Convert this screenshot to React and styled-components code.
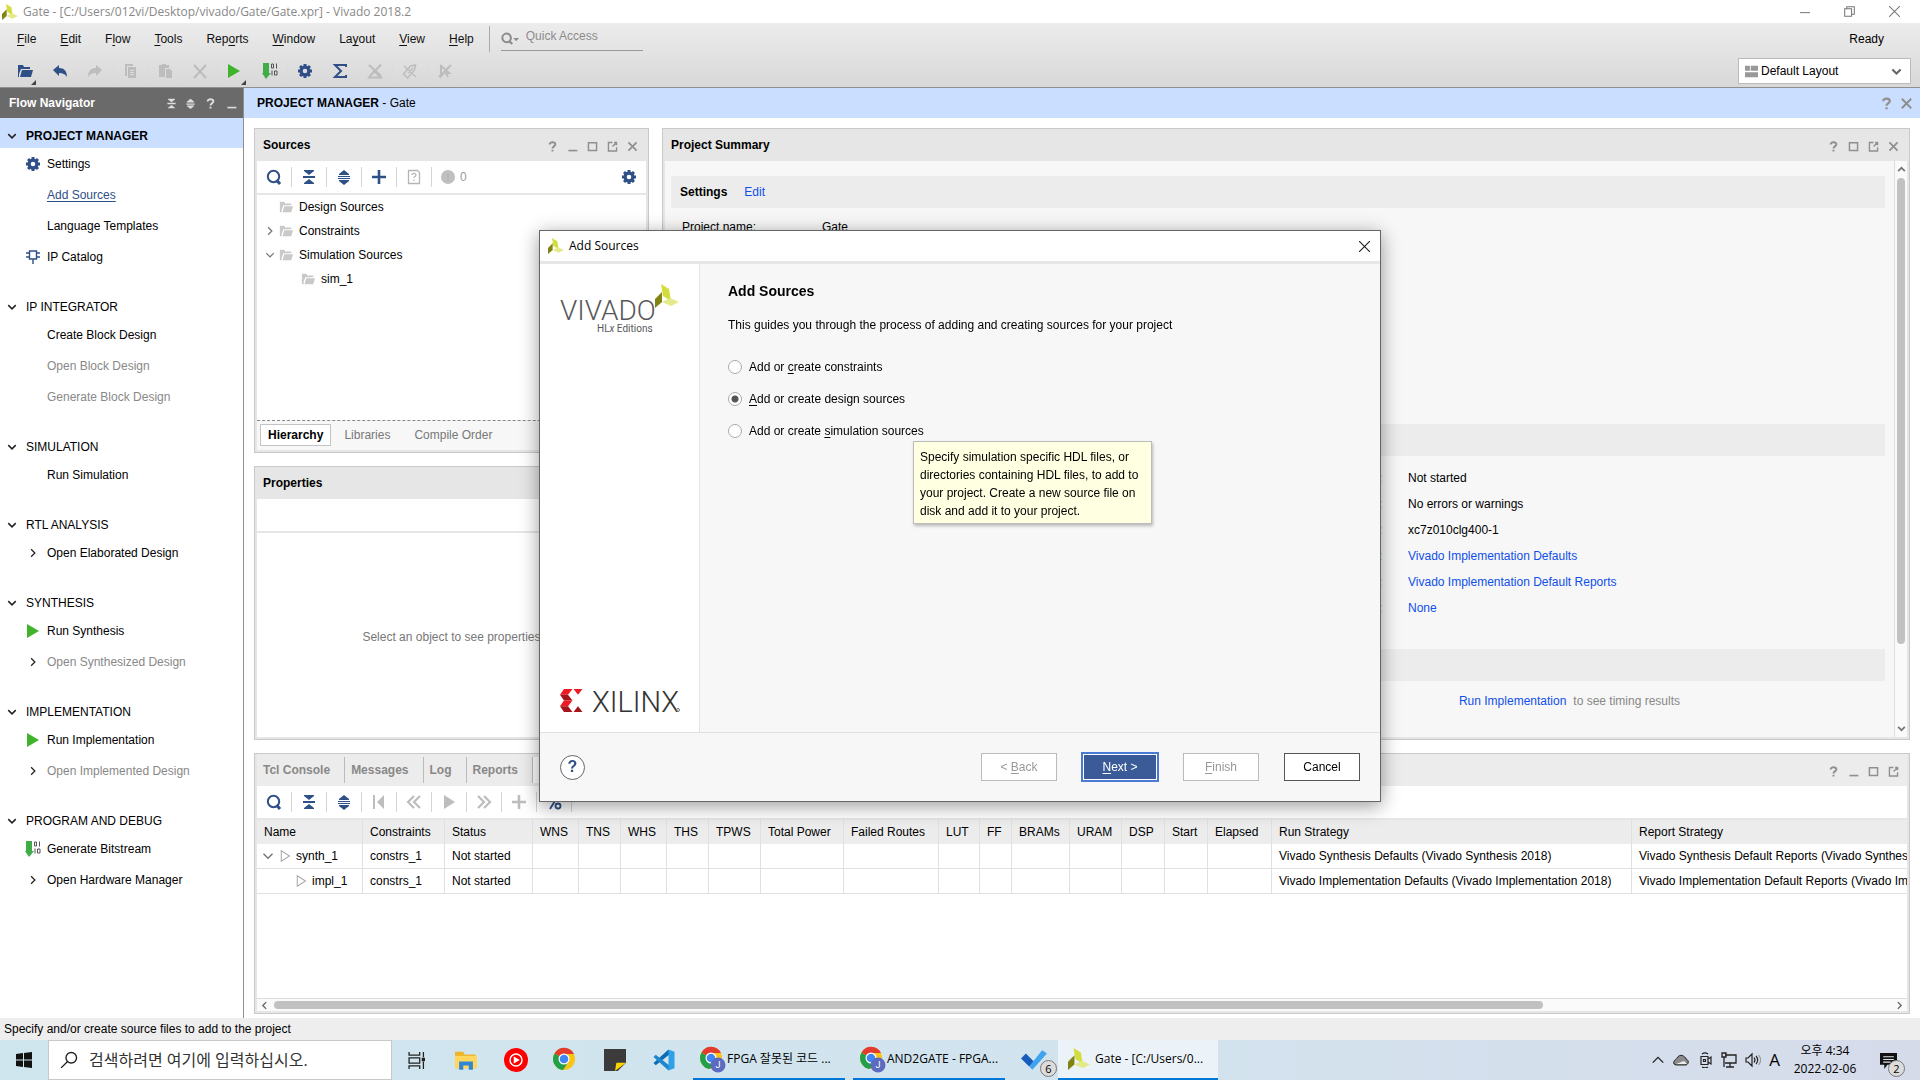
import { useState } from 'react'
import styled, { createGlobalStyle, css } from 'styled-components'

const NAVY = '#2f4f87'
const GRAY = '#bdbdbd'

/* ---------- icons ---------- */

const Svg = ({ size = 16, children, ...rest }) => (
  <svg width={size} height={size} viewBox="0 0 16 16" fill="none" aria-hidden="true" {...rest}>
    {children}
  </svg>
)

const SearchIcon = () => (
  <Svg stroke={NAVY} strokeWidth="2">
    <circle cx="7.5" cy="7.5" r="5.7" />
    <path d="M10.5 11 L14 15" strokeWidth="3" />
  </Svg>
)

const CollapseIcon = ({ color = NAVY, size }) => (
  <Svg size={size} fill={color}>
    <path d="M3 1h10v1L8 6 3 2z M2 7h12v2H2z M8 10l5 4v1H3v-1z" />
  </Svg>
)

const ExpandIcon = ({ color = NAVY, size }) => (
  <Svg size={size} fill={color}>
    <path d="M8 1l5 4v1H3V5z M2 7h12v1H2z M2 9h12v1H2z M3 11h10v1l-5 4-5-4z" />
  </Svg>
)

const PlusIcon = ({ color = NAVY }) => (
  <Svg stroke={color} strokeWidth="2.6">
    <path d="M8 1v14M1 8h14" />
  </Svg>
)

const GearIcon = () => (
  <Svg>
    <circle cx="8" cy="8" r="3.9" stroke={NAVY} strokeWidth="3.2" />
    {[0, 45, 90, 135, 180, 225, 270, 315].map((deg) => (
      <rect key={deg} x="6.5" y="1" width="3" height="3" fill={NAVY} transform={`rotate(${deg} 8 8)`} />
    ))}
  </Svg>
)

const FolderIcon = () => (
  <Svg size={14} fill="#c9c9c9">
    <path d="M1 2h5l1 2h7v2H5L3 11v3H1z M6 7h10l-2 7H4z" />
  </Svg>
)

const PlayIcon = () => (
  <Svg fill="#3fb32c">
    <path d="M2 1l12 7-12 7z" />
  </Svg>
)

const OutlinePlay = () => (
  <Svg size={12} stroke="#aaa" strokeWidth="1.4">
    <path d="M3 1l11 7-11 7z" />
  </Svg>
)

const BitstreamIcon = () => (
  <Svg>
    <path d="M1 0h6v10h2l-5 6-4-6h1z" fill="#41ac48" />
    <path d="M9.500 1h2v4h-2zM14.500 .5v5M10 7.500v5M12.500 8h2.500v4h-2.500z" stroke="#555" />
  </Svg>
)

const ChipIcon = () => (
  <Svg stroke={NAVY} strokeWidth="1.4">
    <path d="M4.500 2h7v8h-7zM1 4h3M1 8h3M12 4h3M12 8h3M8 10v5" />
  </Svg>
)

const Chevron = ({ dir = 'down', color = '#222', size = 10, width = 2.4 }) => {
  const paths = {
    down: 'M2 5l6 6 6-6',
    up: 'M2 11l6-6 6 6',
    right: 'M5 2l6 6-6 6',
    left: 'M11 2L5 8l6 6',
  }
  return (
    <Svg size={size} stroke={color} strokeWidth={width}>
      <path d={paths[dir]} />
    </Svg>
  )
}

const windowPaths = {
  help: <path d="M4.500 5.500C4.500 1.500 11.800 2 11.500 5.500 11.200 8 8 7.800 8 10.500M8 12v2.200" strokeWidth="2.4" />,
  minimize: <path d="M3 13h11" strokeWidth="2" />,
  maximize: <path d="M3 3.500h10v9.500H3z" strokeWidth="1.800" />,
  float: <path d="M8 3H3v10.500h10V9M10 3h3.500M13 2.500v4M13 3L8 8" strokeWidth="1.700" />,
  close: <path d="M3 3l10 10M13 3L3 13" strokeWidth="2.100" />,
}

const Leaves = () => (
  <g>
    <path d="M6 0l8 5 2 12-8-5z" fill="#d3dd3c" />
    <path d="M0 15l7-7v10l-7 6z" fill="#838312" />
    <path d="M7 18l8-4 9 4-8 4z" fill="#e4e98a" />
  </g>
)

const VivadoMark = ({ size = 18 }) => (
  <svg width={size} height={size} viewBox="0 0 24 24" aria-hidden="true">
    <Leaves />
  </svg>
)

const VivadoLogo = () => (
  <svg width="124" height="54" viewBox="0 0 124 54" role="img" aria-label="Vivado HLx Editions">
    <g fontFamily="Roboto, sans-serif" fill="#58585a">
      <text x="0" y="36" fontSize="28" fontWeight="300">VIVADO</text>
      <text x="37" y="48" fontSize="10">HL<tspan fontStyle="italic">x</tspan> Editions</text>
    </g>
    <g transform="translate(95 0)">
      <Leaves />
    </g>
  </svg>
)

const XilinxLogo = () => (
  <svg width="124" height="28" viewBox="0 0 124 28" role="img" aria-label="Xilinx">
    <path d="M4 1h8.500L8 6.700H0z M13.500 1h9L18 6.700z" fill="#ed1c24" />
    <path d="M0 6.700h8l4.500 5.800H4z" fill="#a5151c" />
    <path d="M4 12.500h8.500L8 18.300H0z" fill="#ed1c24" />
    <path d="M0 18.300h8l4.500 5.700H4z M18 18.300l4.500 5.700h-9z" fill="#a5151c" />
    <text x="32" y="24" fontFamily="Roboto, sans-serif" fontSize="29" fontWeight="300" fill="#333">XILINX</text>
    <circle cx="118" cy="22" r="1.500" fill="none" stroke="#777" />
  </svg>
)

const ChromeIcon = ({ profile }) => (
  <svg width="27" height="27" viewBox="0 0 27 27" aria-hidden="true">
    <circle cx="12" cy="12" r="11" fill="#f9c515" />
    <path d="M12 12L2.500 6.500A11 11 0 0 1 22 7H12z" fill="#e33b2e" />
    <path d="M12 12L2.500 6.500A11 11 0 0 0 11 23l4-6z" fill="#23a047" />
    <circle cx="12" cy="12" r="5.500" fill="#fff" />
    <circle cx="12" cy="12" r="4.300" fill="#4285f4" />
    {profile && (
      <g>
        <circle cx="19" cy="19" r="7.500" fill="#5c6bc0" />
        <text x="19" y="22" fontSize="9" fill="#fff" textAnchor="middle" fontFamily="Roboto, sans-serif">J</text>
      </g>
    )}
  </svg>
)

const toolbarIcons = [
  ['Open', <path key="a" d="M1 2h5l1 2h6v2H4L2 11v3H1z M5 7h11l-2 7H3z" fill={NAVY} />, true],
  ['Undo', <path key="a" d="M1 7l6-5v3c5 0 8 3 8 9-2-3-4-4-8-4v3z" fill={NAVY} />],
  ['Redo', <path key="a" d="M15 7L9 2v3c-5 0-8 3-8 9 2-3 4-4 8-4v3z" fill={GRAY} />],
  ['Copy', <path key="a" d="M3 1h8v2H5v10H3z M6 4h8v11H6z M8 7v1h4V7z M8 9v1h4V9z M8 11v1h4v-1z" fillRule="evenodd" fill={GRAY} />],
  ['Paste', <path key="a" d="M2 2h3V1h4v1h3v3H8v9H2z M9 6h4l2 2v7H9z" fill={GRAY} />],
  ['Delete', <path key="a" d="M2 2l12 13M14 2L2 15" stroke={GRAY} strokeWidth="2" />],
  ['Run', <path key="a" d="M1 1l12 7-12 7z" fill="#3fb32c" />, true],
  ['Bitstream', <BitstreamIcon key="a" />],
  ['Settings', <GearIcon key="a" />],
  ['Sigma', <path key="a" d="M14 4V2H3l6 6-6 6h11v-2" stroke={NAVY} strokeWidth="2" />],
  ['Lint', <path key="a" d="M2 14.500h12L7 8zM2 2l12 11M14 1.500L3 13" stroke={GRAY} strokeWidth="2" />],
  ['Clear', <path key="a" d="M1.500 11l7-8 5-1-1 5-7 8zM2 3l12 11M6 10l5-5" stroke={GRAY} strokeWidth="1.500" />],
  ['Deselect', <path key="a" d="M3 2l9 8H9l2 4M4 2v11l3-3M14 2L2 14" stroke={GRAY} strokeWidth="2" />],
]

const runIcons = [
  ['Search', <SearchIcon key="i" />],
  ['Collapse all', <CollapseIcon key="i" />],
  ['Expand all', <ExpandIcon key="i" />],
  ['First', <Svg key="i" fill={GRAY}><path d="M2 1h2v14H2zM13 1v14L6 8z" /></Svg>],
  ['Previous', <Svg key="i" stroke={GRAY} strokeWidth="2.200"><path d="M8 2L2 8l6 6M14 2L8 8l6 6" /></Svg>],
  ['Start', <Svg key="i" fill={GRAY}><path d="M3 1l11 7-11 7z" /></Svg>],
  ['Next', <Svg key="i" stroke={GRAY} strokeWidth="2.200"><path d="M2 2l6 6-6 6M8 2l6 6-6 6" /></Svg>],
  ['Add', <PlusIcon key="i" color={GRAY} />],
  ['Percentage', <Svg key="i" stroke={NAVY} strokeWidth="1.800"><circle cx="4" cy="4" r="2.500" /><circle cx="12" cy="12" r="2.500" /><path d="M12 2L4 15" /></Svg>],
]

/* ---------- data ---------- */

const menus = [
  ['', 'F', 'ile'],
  ['', 'E', 'dit'],
  ['F', 'l', 'ow'],
  ['', 'T', 'ools'],
  ['Rep', 'o', 'rts'],
  ['', 'W', 'indow'],
  ['La', 'y', 'out'],
  ['', 'V', 'iew'],
  ['', 'H', 'elp'],
]

const navChevron = <Chevron dir="right" width={2} />

const flow = [
  {
    title: 'PROJECT MANAGER',
    active: true,
    items: [
      { label: 'Settings', icon: <GearIcon /> },
      { label: 'Add Sources', selected: true },
      { label: 'Language Templates' },
      { label: 'IP Catalog', icon: <ChipIcon /> },
    ],
  },
  {
    title: 'IP INTEGRATOR',
    items: [
      { label: 'Create Block Design' },
      { label: 'Open Block Design', disabled: true },
      { label: 'Generate Block Design', disabled: true },
    ],
  },
  { title: 'SIMULATION', items: [{ label: 'Run Simulation' }] },
  { title: 'RTL ANALYSIS', items: [{ label: 'Open Elaborated Design', icon: navChevron }] },
  {
    title: 'SYNTHESIS',
    items: [
      { label: 'Run Synthesis', icon: <PlayIcon /> },
      { label: 'Open Synthesized Design', icon: navChevron, disabled: true },
    ],
  },
  {
    title: 'IMPLEMENTATION',
    items: [
      { label: 'Run Implementation', icon: <PlayIcon /> },
      { label: 'Open Implemented Design', icon: navChevron, disabled: true },
    ],
  },
  {
    title: 'PROGRAM AND DEBUG',
    items: [
      { label: 'Generate Bitstream', icon: <BitstreamIcon /> },
      { label: 'Open Hardware Manager', icon: navChevron },
    ],
  },
]

const columns = [
  ['Name', 106],
  ['Constraints', 82],
  ['Status', 88],
  ['WNS', 46],
  ['TNS', 42],
  ['WHS', 46],
  ['THS', 42],
  ['TPWS', 52],
  ['Total Power', 83],
  ['Failed Routes', 95],
  ['LUT', 41],
  ['FF', 32],
  ['BRAMs', 58],
  ['URAM', 52],
  ['DSP', 43],
  ['Start', 43],
  ['Elapsed', 64],
  ['Run Strategy', 360],
  ['Report Strategy', 380],
]

const runs = [
  {
    Name: 'synth_1',
    Constraints: 'constrs_1',
    Status: 'Not started',
    'Run Strategy': 'Vivado Synthesis Defaults (Vivado Synthesis 2018)',
    'Report Strategy': 'Vivado Synthesis Default Reports (Vivado Synthesis 2018)',
  },
  {
    Name: 'impl_1',
    child: true,
    Constraints: 'constrs_1',
    Status: 'Not started',
    'Run Strategy': 'Vivado Implementation Defaults (Vivado Implementation 2018)',
    'Report Strategy': 'Vivado Implementation Default Reports (Vivado Implementation 2018)',
  },
]

const implementation = [
  ['Status:', 'Not started'],
  ['Messages:', 'No errors or warnings'],
  ['Part:', 'xc7z010clg400-1'],
  ['Strategy:', 'Vivado Implementation Defaults', true],
  ['Report Strategy:', 'Vivado Implementation Default Reports', true],
  ['Incremental compile:', 'None', true],
]

const choices = [
  { id: 'constraints', before: 'Add or ', key: 'c', after: 'reate constraints' },
  { id: 'design', before: '', key: 'A', after: 'dd or create design sources' },
  { id: 'simulation', before: 'Add or create ', key: 's', after: 'imulation sources' },
]

/* ---------- components ---------- */

const WindowButtons = ({ names, large }) => (
  <PanelButtons $large={large}>
    {names.map((name) => (
      <PanelButton key={name} aria-label={name}>
        <Svg size={large ? 15 : 13} stroke="#8f8f8f">{windowPaths[name]}</Svg>
      </PanelButton>
    ))}
  </PanelButtons>
)

function AppHeader() {
  return (
    <header>
      <TitleBar>
        <VivadoMark size={16} />
        <TitleText>Gate - [C:/Users/012vi/Desktop/vivado/Gate/Gate.xpr] - Vivado 2018.2</TitleText>
        <CaptionButton aria-label="Minimize window"><Svg size={10} stroke="#777"><path d="M0 9h16" strokeWidth="1.600" /></Svg></CaptionButton>
        <CaptionButton aria-label="Restore window"><Svg size={11} stroke="#777" strokeWidth="1.500"><path d="M1 4h10v11H1zM4 4V1h11v11h-4" /></Svg></CaptionButton>
        <CaptionButton aria-label="Close window"><Svg size={11} stroke="#777" strokeWidth="1.500"><path d="M0 0l16 16M16 0L0 16" /></Svg></CaptionButton>
      </TitleBar>
      <Bars>
        <MenuRow>
          <Menus>
            {menus.map(([a, b, c]) => (
              <MenuButton key={a + b + c}>{a}<u>{b}</u>{c}</MenuButton>
            ))}
          </Menus>
          <QuickAccess>
            <Svg size={18} stroke="#8c8c8c" strokeWidth="1.800">
              <circle cx="5" cy="7" r="3.800" />
              <path d="M7 9.500l3 3" strokeWidth="2" />
              <path d="M11 7h5l-2.500 3z" fill="#8c8c8c" stroke="none" />
            </Svg>
            <QuickInput placeholder="Quick Access" aria-label="Quick Access" />
          </QuickAccess>
          <Ready>Ready</Ready>
        </MenuRow>
        <ToolRow>
          {toolbarIcons.map(([name, icon, more]) => (
            <ToolButton key={name} aria-label={name} $top>
              <Svg>{icon}</Svg>
              {more && <MoreCorner />}
            </ToolButton>
          ))}
          <LayoutPicker>
            <Svg size={13} fill="#999"><path d="M0 1h6v6H0zM7 1h9v6H7zM0 9h16v6H0z" /></Svg>
            <LayoutSelect aria-label="Layout" defaultValue="default">
              <option value="default">Default Layout</option>
            </LayoutSelect>
            <Chevron color="#666" size={11} width={3} />
          </LayoutPicker>
        </ToolRow>
      </Bars>
    </header>
  )
}

function FlowNavigator() {
  return (
    <Navigator>
      <NavTitle>
        <span>Flow Navigator</span>
        <NavTools>
          <CollapseIcon color="#ddd" size={11} />
          <ExpandIcon color="#ddd" size={11} />
          <Svg size={13} stroke="#ddd">{windowPaths.help}</Svg>
          <Svg size={13} stroke="#ddd">{windowPaths.minimize}</Svg>
        </NavTools>
      </NavTitle>
      {flow.map((section) => (
        <NavSection key={section.title}>
          <NavHeading $active={section.active}>
            <Chevron />
            {section.title}
          </NavHeading>
          {section.items.map((item) => (
            <NavItem key={item.label} disabled={item.disabled} $selected={item.selected}>
              <NavIcon>{item.icon}</NavIcon>
              <span>{item.label}</span>
            </NavItem>
          ))}
        </NavSection>
      ))}
    </Navigator>
  )
}

function SourcesPanel() {
  return (
    <Panel $grow={325}>
      <PanelHeader>
        <span>Sources</span>
        <WindowButtons names={['help', 'minimize', 'maximize', 'float', 'close']} />
      </PanelHeader>
      <PanelTools>
        <ToolButton aria-label="Search sources"><SearchIcon /></ToolButton>
        <ToolButton aria-label="Collapse all"><CollapseIcon /></ToolButton>
        <ToolButton aria-label="Expand all"><ExpandIcon /></ToolButton>
        <ToolButton aria-label="Add"><PlusIcon /></ToolButton>
        <ToolButton aria-label="File info">
          <Svg stroke="#b5b5b5" strokeWidth="1.300">
            <path d="M2.500 1.500h9l2 2v11h-11zM6 6c0-2.500 4-2 4 0 0 1.500-2 1.500-2 3M8 10.500v1.500" />
          </Svg>
        </ToolButton>
        <Count>
          <Svg size={14}><circle cx="8" cy="8" r="8" fill="#c0c0c0" /><path d="M8 4v5M8 10.500v2" stroke="#b3b3b3" strokeWidth="2" /></Svg>
          0
        </Count>
        <PushedButton aria-label="Sources settings"><GearIcon /></PushedButton>
      </PanelTools>
      <Tree>
        <TreeRow><TreeToggle /><FolderIcon />Design Sources</TreeRow>
        <TreeRow><TreeToggle><Chevron dir="right" color="#777" width={2} /></TreeToggle><FolderIcon />Constraints</TreeRow>
        <TreeRow><TreeToggle><Chevron color="#777" width={2} /></TreeToggle><FolderIcon />Simulation Sources</TreeRow>
        <TreeRow $nested><TreeToggle /><FolderIcon />sim_1</TreeRow>
      </Tree>
      <ViewTabs>
        <ViewTab $active>Hierarchy</ViewTab>
        <ViewTab>Libraries</ViewTab>
        <ViewTab>Compile Order</ViewTab>
      </ViewTabs>
    </Panel>
  )
}

function PropertiesPanel() {
  return (
    <Panel $grow={274}>
      <PanelHeader>
        <span>Properties</span>
      </PanelHeader>
      <PanelTools />
      <EmptyNote>Select an object to see properties</EmptyNote>
    </Panel>
  )
}

function SummaryPanel() {
  return (
    <Panel>
      <PanelHeader>
        <span>Project Summary</span>
        <WindowButtons names={['help', 'maximize', 'float', 'close']} />
      </PanelHeader>
      <SummaryBody>
        <SummaryContent>
          <SummaryBar><b>Settings</b><a href="#edit">Edit</a></SummaryBar>
          <SettingsList>
            <dt>Project name:</dt>
            <dd>Gate</dd>
          </SettingsList>
          <SummaryBar />
          <RunList>
            {implementation.map(([label, value, link]) => (
              <RunLine key={label}>
                <dt>{label}</dt>
                <dd>{link ? <a href="#run">{value}</a> : value}</dd>
              </RunLine>
            ))}
          </RunList>
          <SummaryBar />
          <TimingNote>
            <a href="#implementation">Run Implementation</a>
            <span>to see timing results</span>
          </TimingNote>
        </SummaryContent>
        <VScroll>
          <Chevron dir="up" color="#777" size={9} width={3} />
          <VTrack><VThumb /></VTrack>
          <Chevron color="#777" size={9} width={3} />
        </VScroll>
      </SummaryBody>
    </Panel>
  )
}

function RunsPanel() {
  return (
    <Panel $grow={257}>
      <TabHeader>
        <ConsoleTab>Tcl Console</ConsoleTab>
        <ConsoleTab>Messages</ConsoleTab>
        <ConsoleTab>Log</ConsoleTab>
        <ConsoleTab>Reports</ConsoleTab>
        <ConsoleTab $active>Design Runs</ConsoleTab>
        <WindowButtons names={['help', 'minimize', 'maximize', 'float']} />
      </TabHeader>
      <PanelTools>
        {runIcons.map(([name, icon]) => (
          <ToolButton key={name} aria-label={name}>{icon}</ToolButton>
        ))}
      </PanelTools>
      <TableArea>
        <Table>
          <colgroup>
            {columns.map(([name, width]) => <col key={name} width={width} />)}
          </colgroup>
          <thead>
            <tr>{columns.map(([name]) => <th key={name}>{name}</th>)}</tr>
          </thead>
          <tbody>
            {runs.map((run) => (
              <tr key={run.Name}>
                {columns.map(([name]) => (
                  <td key={name}>
                    {name === 'Name' ? (
                      <RunName $child={run.child}>
                        {!run.child && <Chevron color="#777" size={12} width={2} />}
                        <OutlinePlay />
                        {run.Name}
                      </RunName>
                    ) : run[name]}
                  </td>
                ))}
              </tr>
            ))}
          </tbody>
        </Table>
      </TableArea>
      <HScroll>
        <Chevron dir="left" color="#666" size={9} />
        <HTrack><HThumb /></HTrack>
        <Chevron dir="right" color="#666" size={9} />
      </HScroll>
    </Panel>
  )
}

function AddSourcesDialog() {
  const [choice, setChoice] = useState('design')

  return (
    <Overlay>
      <Dialog role="dialog" aria-label="Add Sources">
        <DialogTitle>
          <VivadoMark size={16} />
          <span>Add Sources</span>
          <DialogClose aria-label="Close">
            <Svg size={11} stroke="#222" strokeWidth="1.700"><path d="M0 0l16 16M16 0L0 16" /></Svg>
          </DialogClose>
        </DialogTitle>
        <DialogBody>
          <Brand>
            <VivadoLogo />
            <XilinxLogo />
          </Brand>
          <DialogContent>
            <DialogHeading>Add Sources</DialogHeading>
            <DialogText>This guides you through the process of adding and creating sources for your project</DialogText>
            <Choices>
              {choices.map(({ id, before, key, after }) => (
                <Choice key={id}>
                  <Radio
                    type="radio"
                    name="source"
                    checked={choice === id}
                    onChange={() => setChoice(id)}
                  />
                  <span>{before}<u>{key}</u>{after}</span>
                </Choice>
              ))}
              <Tooltip role="tooltip">
                Specify simulation specific HDL files, or<br />
                directories containing HDL files, to add to<br />
                your project. Create a new source file on<br />
                disk and add it to your project.
              </Tooltip>
            </Choices>
          </DialogContent>
        </DialogBody>
        <DialogFooter>
          <HelpButton aria-label="Help">?</HelpButton>
          <DialogButton disabled>&lt; <u>B</u>ack</DialogButton>
          <DialogButton $primary><u>N</u>ext &gt;</DialogButton>
          <DialogButton disabled><u>F</u>inish</DialogButton>
          <DialogButton>Cancel</DialogButton>
        </DialogFooter>
      </Dialog>
    </Overlay>
  )
}

function Taskbar() {
  return (
    <Task>
      <TaskIcon aria-label="Start" $wide={48}>
        <Svg fill="#111"><path d="M0 2l7-1v6.500H0zM8 1l8-1v7.500H8zM0 8.500h7V15l-7-1zM8 8.500h8V16l-8-1z" /></Svg>
      </TaskIcon>
      <TaskSearch>
        <Svg size={18} stroke="#222" strokeWidth="1.200"><circle cx="10" cy="6" r="4.700" /><path d="M6.500 9.500L1 15" /></Svg>
        <input placeholder="검색하려면 여기에 입력하십시오." aria-label="검색" />
      </TaskSearch>
      <Pinned>
        <TaskIcon aria-label="Task view">
          <Svg size={17} stroke="#222" strokeWidth="1.200"><path d="M1 0v3h10V0M1 16v-3h10v3M1 5.500h10v5H1zM14.500 0v5M14.500 9v7" /><path d="M13.500 6h2v2h-2z" fill="#222" /></Svg>
        </TaskIcon>
        <TaskIcon aria-label="File Explorer">
          <Svg size={22}><path d="M0 2h6l1 2h8v10H0z" fill="#f0b429" /><path d="M0 5h16v9H0z" fill="#ffd75e" /><path d="M3 9h10v6h-3v-3H6v3H3z" fill="#2f86d2" /></Svg>
        </TaskIcon>
        <TaskIcon aria-label="YouTube Music">
          <Svg size={24}><circle cx="8" cy="8" r="8" fill="#f00" /><circle cx="8" cy="8" r="4" stroke="#fff" /><path d="M6.500 5.700v4.600L10.500 8z" fill="#fff" /></Svg>
        </TaskIcon>
        <TaskIcon aria-label="Chrome"><ChromeIcon /></TaskIcon>
        <TaskIcon aria-label="Sticky Notes">
          <Svg size={22}><path d="M0 0h16v10l-6 6H0z" fill="#3b3b3b" /><path d="M8 16l1-6h7z" fill="#ffd500" /></Svg>
        </TaskIcon>
        <TaskIcon aria-label="Visual Studio Code">
          <Svg size={24}>
            <path d="M11 1L1 10l1.500 1.500L12 4z" fill="#0b6cb3" />
            <path d="M11 15L1 6l1.500-1.500L12 12z" fill="#1e86cf" />
            <path d="M11 1l4 1.500v11L11 15z" fill="#2f9fe8" />
          </Svg>
        </TaskIcon>
      </Pinned>
      <TaskWindow><ChromeIcon profile /><span>FPGA 잘못된 코드 ...</span></TaskWindow>
      <TaskWindow><ChromeIcon profile /><span>AND2GATE - FPGA...</span></TaskWindow>
      <TaskIcon aria-label="To Do">
        <Svg size={26}><path d="M0 7l3-3 5 5-3 3z" fill="#195abd" /><path d="M5 12l8-10 3 2-9 10z" fill="#3fa3f0" /></Svg>
        <Badge>6</Badge>
      </TaskIcon>
      <TaskWindow $active><VivadoMark size={22} /><span>Gate - [C:/Users/0...</span></TaskWindow>
      <Tray>
        <Chevron dir="up" size={14} width={1.6} />
        <Svg><path d="M1 12C0 8 3 8 4 6c3-5 8-2 9 1 3 1 3 5 0 6H3z" fill="#8b8b8b" stroke="#222" /><path d="M3 12l8-3 3 3z" fill="#eee" /></Svg>
        <Svg stroke="#222" strokeWidth="1.200"><path d="M4 4.500h7v8H4zM11 7l3-2v7l-3-2M5 2c2-1.500 4-1.500 6 0M5 15c2 1 4 1 6 0M6.500 7.500h2v2h-2z" /></Svg>
        <Svg stroke="#222" strokeWidth="1.300"><path d="M4 3h11v8H4M9 11v4M5 15h8M1 1h4v4H1zM3 5v10" /></Svg>
        <Svg stroke="#222" strokeWidth="1.200"><path d="M1 6v4h2l4 4V2L3 6zM9 5.500c1.500 2 1.500 3 0 5M11 4c2.500 3 2.500 5 0 8" /><path d="M13.500 3c3 4 3 6 0 10" stroke="#999" /></Svg>
        <InputMode>A</InputMode>
        <Clock>
          <span>오후 4:34</span>
          <span>2022-02-06</span>
        </Clock>
        <TaskIcon aria-label="Notifications" $wide={36}>
          <Svg size={17}><path d="M0 1h16v11H7l-3 4v-4H0z" fill="#111" /><path d="M3 4.500h10M3 7h10M3 9.500h7" stroke="#dde3ee" /></Svg>
          <Badge>2</Badge>
        </TaskIcon>
      </Tray>
    </Task>
  )
}

function App() {
  return (
    <Page>
      <GlobalStyle />
      <AppHeader />
      <Main>
        <FlowNavigator />
        <Workspace>
          <ContextBar>
            <span><b>PROJECT MANAGER</b> - Gate</span>
            <WindowButtons names={['help', 'close']} large />
          </ContextBar>
          <Panels>
            <UpperPanels>
              <LeftPanels>
                <SourcesPanel />
                <PropertiesPanel />
              </LeftPanels>
              <SummaryPanel />
            </UpperPanels>
            <RunsPanel />
          </Panels>
        </Workspace>
      </Main>
      <StatusBar>Specify and/or create source files to add to the project</StatusBar>
      <Taskbar />
      <AddSourcesDialog />
    </Page>
  )
}

/* ---------- styles ---------- */

const GlobalStyle = createGlobalStyle`
  * {
    box-sizing: border-box;
  }

  body {
    margin: 0;
    overflow: hidden;
    background: #fff;
    color: #000;
    font: 12px/16px 'Liberation Sans', 'Noto Sans CJK KR', sans-serif;
  }

  button, input, select {
    font: inherit;
    color: inherit;
    margin: 0;
    padding: 0;
    border: none;
    background: none;
    outline: none;
  }

  a {
    color: #0f4fea;
    text-decoration: none;
  }

  u {
    text-underline-offset: 2px;
  }

  svg {
    display: block;
    flex: none;
  }

  dl, dt, dd, p, h1 {
    margin: 0;
  }
`

const systemFont = css`
  font-family: 'Open Sans', 'Noto Sans CJK KR', sans-serif;
`

const Page = styled.div`
  display: flex;
  flex-direction: column;
  height: 100vh;
`

const TitleBar = styled.div`
  ${systemFont}
  display: flex;
  align-items: center;
  height: 23px;
  padding: 0 3px 0 2px;
  color: #888;
`

const TitleText = styled.span`
  flex: 1;
  margin-left: 5px;
`

const CaptionButton = styled.button`
  display: flex;
  justify-content: center;
  width: 45px;
`

const Bars = styled.div`
  background: linear-gradient(#ececec, #d8d8d8);
  border-bottom: 1px solid #8f8f8f;
`

const MenuRow = styled.div`
  display: flex;
  align-items: center;
  height: 32px;
  padding-left: 17px;
`

const Menus = styled.nav`
  display: flex;
  gap: 24px;
  padding-right: 15px;
`

const MenuButton = styled.button`
  color: #111;
`

const QuickAccess = styled.label`
  display: flex;
  align-items: center;
  height: 26px;
  padding-left: 11px;
  border-left: 1px solid #aaa;
`

const QuickInput = styled.input`
  width: 142px;
  height: 24px;
  margin-left: -18px;
  padding: 0 0 6px 25px;
  border-bottom: 1px solid #999;

  &::placeholder {
    color: #8c8c8c;
  }
`

const Ready = styled.span`
  margin-left: auto;
  padding-right: 36px;
`

const ToolRow = styled.div`
  display: flex;
  align-items: center;
  height: 32px;
  padding: 0 9px 0 8px;
`

const ToolButton = styled.button`
  display: flex;
  align-items: center;
  justify-content: center;
  position: relative;
  width: 35px;
  height: 20px;
  border-right: 1px solid ${({ $top }) => ($top ? '#dcdcdc' : '#d5d5d5')};
`

const MoreCorner = styled.i`
  position: absolute;
  right: 6px;
  bottom: -4px;
  border-left: 5px solid transparent;
  border-bottom: 5px solid #444;
`

const LayoutPicker = styled.div`
  display: flex;
  align-items: center;
  gap: 3px;
  width: 173px;
  height: 26px;
  margin-left: auto;
  padding: 0 8px 0 6px;
  border: 1px solid #bbb;
  background: #fff;
`

const LayoutSelect = styled.select`
  flex: 1;
  appearance: none;
`

const Main = styled.main`
  display: flex;
  flex: 1;
  min-height: 0;
`

const Navigator = styled.aside`
  width: 244px;
  border-right: 1px solid #8f8f8f;
`

const NavTitle = styled.div`
  display: flex;
  align-items: center;
  justify-content: space-between;
  height: 30px;
  padding: 0 5px 0 9px;
  background: #6a6a6a;
  color: #fff;
  font-weight: bold;
`

const NavTools = styled.div`
  display: flex;
  align-items: center;
  gap: 8px;
`

const NavSection = styled.section`
  margin-bottom: 17px;
`

const NavHeading = styled.div`
  display: flex;
  align-items: center;
  gap: 9px;
  height: 30px;
  padding: 6px 0 0 7px;
  background: ${({ $active }) => ($active ? '#cadeff' : 'transparent')};
  font-weight: ${({ $active }) => ($active ? 'bold' : 'normal')};
`

const NavItem = styled.button`
  display: flex;
  align-items: center;
  width: 100%;
  height: 31px;
  padding-left: 25px;
  color: ${({ disabled, $selected }) => (disabled ? '#888' : $selected ? NAVY : '#000')};

  span {
    text-decoration: ${({ $selected }) => ($selected ? 'underline' : 'none')};
    text-underline-offset: 2px;
  }
`

const NavIcon = styled.i`
  display: flex;
  justify-content: center;
  width: 16px;
  margin-right: 6px;
`

const Workspace = styled.div`
  display: flex;
  flex: 1;
  flex-direction: column;
  min-width: 0;
`

const ContextBar = styled.div`
  display: flex;
  align-items: center;
  justify-content: space-between;
  height: 30px;
  padding: 0 4px 0 13px;
  background: #cadeff;
`

const Panels = styled.div`
  display: flex;
  flex: 1;
  flex-direction: column;
  gap: 13px;
  min-height: 0;
  padding: 10px 10px 4px;
`

const UpperPanels = styled.div`
  display: grid;
  grid-template-columns: 395px minmax(0, 1fr);
  grid-template-rows: minmax(0, 1fr);
  gap: 13px;
  flex: 613 1 0;
  min-height: 0;
`

const LeftPanels = styled.div`
  display: flex;
  flex-direction: column;
  gap: 13px;
`

const Panel = styled.section`
  display: flex;
  flex-direction: column;
  flex: ${({ $grow = 1 }) => $grow} 1 0;
  min-height: 0;
  border: 1px solid #c9c9c9;
  box-shadow: inset 0 0 0 2px #e6e6e6;
  padding: 0 2px 2px;
`

const PanelHeader = styled.div`
  display: flex;
  align-items: center;
  justify-content: space-between;
  flex: none;
  height: 32px;
  padding: 0 4px 0 6px;
  background: #e6e6e6;
  font-weight: bold;
`

const PanelButtons = styled.div`
  display: flex;
  margin-left: auto;
  padding-top: ${({ $large }) => ($large ? 0 : 3)}px;
`

const PanelButton = styled.button`
  display: flex;
  align-items: center;
  justify-content: center;
  width: 20px;
  height: 20px;
`

const PanelTools = styled.div`
  display: flex;
  align-items: center;
  flex: none;
  height: 34px;
  background: #fff;
  border-bottom: 2px solid #e6e6e6;
`

const Count = styled.span`
  display: flex;
  align-items: center;
  gap: 5px;
  padding-left: 9px;
  color: #999;
`

const PushedButton = styled.button`
  margin: 0 9px 0 auto;
`

const Tree = styled.div`
  flex: 1;
`

const TreeRow = styled.div`
  display: flex;
  align-items: center;
  gap: 6px;
  height: 24px;
  padding-left: ${({ $nested }) => ($nested ? 31 : 9)}px;
`

const TreeToggle = styled.i`
  display: flex;
  justify-content: center;
  width: 7px;
`

const ViewTabs = styled.div`
  display: flex;
  align-items: center;
  height: 30px;
  gap: 2px;
  padding-left: 3px;
  border-top: 1px dashed #888;
  background: #f7f7f7;
`

const ViewTab = styled.button`
  height: 22px;
  padding: 0 11px;
  color: #777;

  ${({ $active }) =>
    $active &&
    css`
      padding: 0 7px;
      border: 1px solid #c4c4c4;
      background: #fff;
      color: #000;
      font-weight: bold;
    `}
`

const EmptyNote = styled.p`
  display: flex;
  align-items: center;
  justify-content: center;
  flex: 1;
  padding-top: 4px;
  color: #777;
`

const SummaryBody = styled.div`
  display: flex;
  flex: 1;
  min-height: 0;
  background: #f7f7f7;
`

const SummaryContent = styled.div`
  flex: 1;
  overflow: hidden;
  padding: 15px 9px 0 6px;
`

const SummaryBar = styled.div`
  display: flex;
  align-items: center;
  gap: 17px;
  height: 32px;
  padding-left: 9px;
  background: #ececec;
`

const SettingsList = styled.dl`
  display: grid;
  grid-template-columns: 140px 1fr;
  grid-auto-rows: 26px;
  align-items: center;
  align-content: start;
  min-height: 216px;
  padding: 6px 0 28px 11px;
`

const RunList = styled.dl`
  width: 50%;
  margin-left: auto;
  padding: 9px 0 28px;
`

const RunLine = styled.div`
  display: flex;
  align-items: center;
  height: 26px;

  dt {
    display: flex;
    justify-content: flex-end;
    width: 130px;
    padding-right: 26px;
    white-space: nowrap;
  }
`

const TimingNote = styled.p`
  display: flex;
  justify-content: center;
  gap: 7px;
  width: 50%;
  margin-left: auto;
  padding: 12px 24px 0 0;
  color: #888;
`

const VScroll = styled.div`
  display: flex;
  flex-direction: column;
  align-items: center;
  width: 13px;
  padding: 4px 0;
  border-left: 1px solid #ddd;
  background: #fafafa;
`

const VTrack = styled.div`
  flex: 1;
  width: 8px;
  margin: 4px 0;
`

const VThumb = styled.div`
  height: 86%;
  border-radius: 4px;
  background: #c1c1c1;
`

const TabHeader = styled.div`
  display: flex;
  align-items: center;
  flex: none;
  height: 32px;
  padding-right: 4px;
  background: #ececec;
`

const ConsoleTab = styled.button`
  height: 26px;
  padding: 0 14px 0 6px;
  border-right: 1px solid #bbb;
  color: ${({ $active }) => ($active ? '#000' : '#888')};
  background: ${({ $active }) => ($active ? '#fff' : 'none')};
  font-weight: bold;
`

const TableArea = styled.div`
  flex: 1;
  min-height: 0;
  overflow: hidden;
`

const Table = styled.table`
  table-layout: fixed;
  width: 1755px;
  border-collapse: separate;
  border-spacing: 0;

  th, td {
    height: 25px;
    padding: 0 0 0 7px;
    border-right: 1px solid #e0e0e0;
    border-bottom: 1px solid #e0e0e0;
    font-weight: normal;
    text-align: left;
    white-space: nowrap;
  }

  th {
    height: 24px;
    border-bottom: none;
    background: #ececec;
  }
`

const RunName = styled.span`
  display: flex;
  align-items: center;
  gap: 5px;
  margin-left: -2px;
  padding-left: ${({ $child }) => ($child ? 33 : 0)}px;
`

const HScroll = styled.div`
  display: flex;
  align-items: center;
  flex: none;
  gap: 5px;
  height: 13px;
  padding: 0 3px;
  border-top: 1px solid #ddd;
  background: #fafafa;
`

const HTrack = styled.div`
  flex: 1;
`

const HThumb = styled.div`
  width: 78.5%;
  height: 8px;
  border-radius: 4px;
  background: #c1c1c1;
`

const StatusBar = styled.div`
  flex: none;
  height: 22px;
  padding: 3px 4px;
  background: #eee;
`

const Overlay = styled.div`
  position: fixed;
  inset: 0;
  display: flex;
  align-items: center;
  justify-content: center;
  padding-bottom: 48px;
`

const Dialog = styled.div`
  display: flex;
  flex-direction: column;
  width: 842px;
  border: 1px solid #666;
  background: #f7f7f7;
  box-shadow: 0 4px 18px rgba(0, 0, 0, 0.4);
`

const DialogTitle = styled.div`
  ${systemFont}
  display: flex;
  align-items: center;
  gap: 5px;
  height: 33px;
  padding: 0 10px 0 8px;
  border-bottom: 3px solid #e6e6e6;
  background: #fff;
`

const DialogClose = styled.button`
  margin-left: auto;
`

const DialogBody = styled.div`
  display: flex;
`

const Brand = styled.div`
  display: flex;
  flex-direction: column;
  justify-content: space-between;
  width: 160px;
  height: 468px;
  padding: 20px 0 16px 20px;
  border-right: 1px solid #e3e3e3;
  background: #fff;
`

const DialogContent = styled.div`
  flex: 1;
  padding: 19px 28px;
`

const DialogHeading = styled.h1`
  font-size: 14px;
  line-height: 16px;
`

const DialogText = styled.p`
  margin-top: 18px;
`

const Choices = styled.div`
  display: flex;
  flex-direction: column;
  align-items: flex-start;
  gap: 16px;
  position: relative;
  margin-top: 26px;
`

const Choice = styled.label`
  display: flex;
  align-items: center;
  gap: 7px;
  height: 16px;
`

const Radio = styled.input`
  appearance: none;
  width: 14px;
  height: 14px;
  border: 1px solid #aaa;
  border-radius: 50%;
  background: #fff;

  &:checked {
    background: radial-gradient(#555 3px, #fff 4px);
  }
`

const Tooltip = styled.div`
  position: absolute;
  top: 82px;
  left: 185px;
  min-width: 239px;
  padding: 6px 6px 3px;
  border: 1px solid #bbb;
  background: #ffffe1;
  box-shadow: 1px 2px 3px rgba(0, 0, 0, 0.25);
  line-height: 18px;
  white-space: nowrap;
`

const DialogFooter = styled.div`
  display: flex;
  align-items: center;
  gap: 25px;
  height: 69px;
  padding: 0 20px;
  border-top: 1px solid #e0e0e0;
`

const HelpButton = styled.button`
  width: 25px;
  height: 25px;
  margin-right: auto;
  border: 1px solid #666;
  border-radius: 50%;
  background: #fff;
  color: ${NAVY};
  font-size: 16px;
  font-weight: bold;
`

const DialogButton = styled.button`
  width: 76px;
  height: 28px;
  border: 1px solid #555;
  background: #fff;

  &:disabled {
    border-color: #bbb;
    color: #999;
  }

  ${({ $primary }) =>
    $primary &&
    css`
      border-color: #4a7bd4;
      background: #3a5a98;
      color: #fff;
      box-shadow: 0 0 0 1px #4a7bd4, inset 0 0 0 1px #fff;
    `}
`

const Task = styled.footer`
  ${systemFont}
  display: flex;
  align-items: stretch;
  flex: none;
  height: 40px;
  background: linear-gradient(90deg, #cfe6ef, #d2e3ee 60%, #d6dbea);
`

const Pinned = styled.div`
  display: flex;
  justify-content: space-between;
  width: 297px;
`

const TaskIcon = styled.button`
  display: flex;
  align-items: center;
  justify-content: center;
  position: relative;
  width: ${({ $wide = 49 }) => $wide}px;
`

const TaskSearch = styled.label`
  display: flex;
  align-items: center;
  gap: 11px;
  width: 344px;
  padding-left: 11px;
  border: 1px solid #c8c8c8;
  background: #fff;
  font-size: 16px;

  input {
    flex: 1;
  }

  input::placeholder {
    color: #333;
  }
`

const TaskWindow = styled.button`
  display: flex;
  align-items: center;
  gap: ${({ $active }) => ($active ? 5 : 1)}px;
  width: ${({ $active }) => ($active ? 160 : 152)}px;
  margin: 0 4px 0 ${({ $active }) => ($active ? 0 : 4)}px;
  padding-left: ${({ $active }) => ($active ? 10 : 6)}px;
  border-bottom: 2px solid #0078d7;
  background: ${({ $active }) => ($active ? '#ecf3f8' : 'none')};
  white-space: nowrap;
`

const Badge = styled.span`
  position: absolute;
  right: 1px;
  bottom: 3px;
  width: 17px;
  height: 17px;
  border: 1px solid #777;
  border-radius: 50%;
  background: #dcdcdc;
  font-size: 11px;
  line-height: 15px;
  text-align: center;
`

const Tray = styled.div`
  display: flex;
  align-items: center;
  gap: 8px;
  margin-left: auto;
  padding-right: 14px;

  ${TaskIcon} {
    height: 40px;
  }
`

const InputMode = styled.span`
  font-size: 17px;
`

const Clock = styled.div`
  display: flex;
  flex-direction: column;
  align-items: center;
  width: 74px;
  line-height: 18px;
`

export default App
